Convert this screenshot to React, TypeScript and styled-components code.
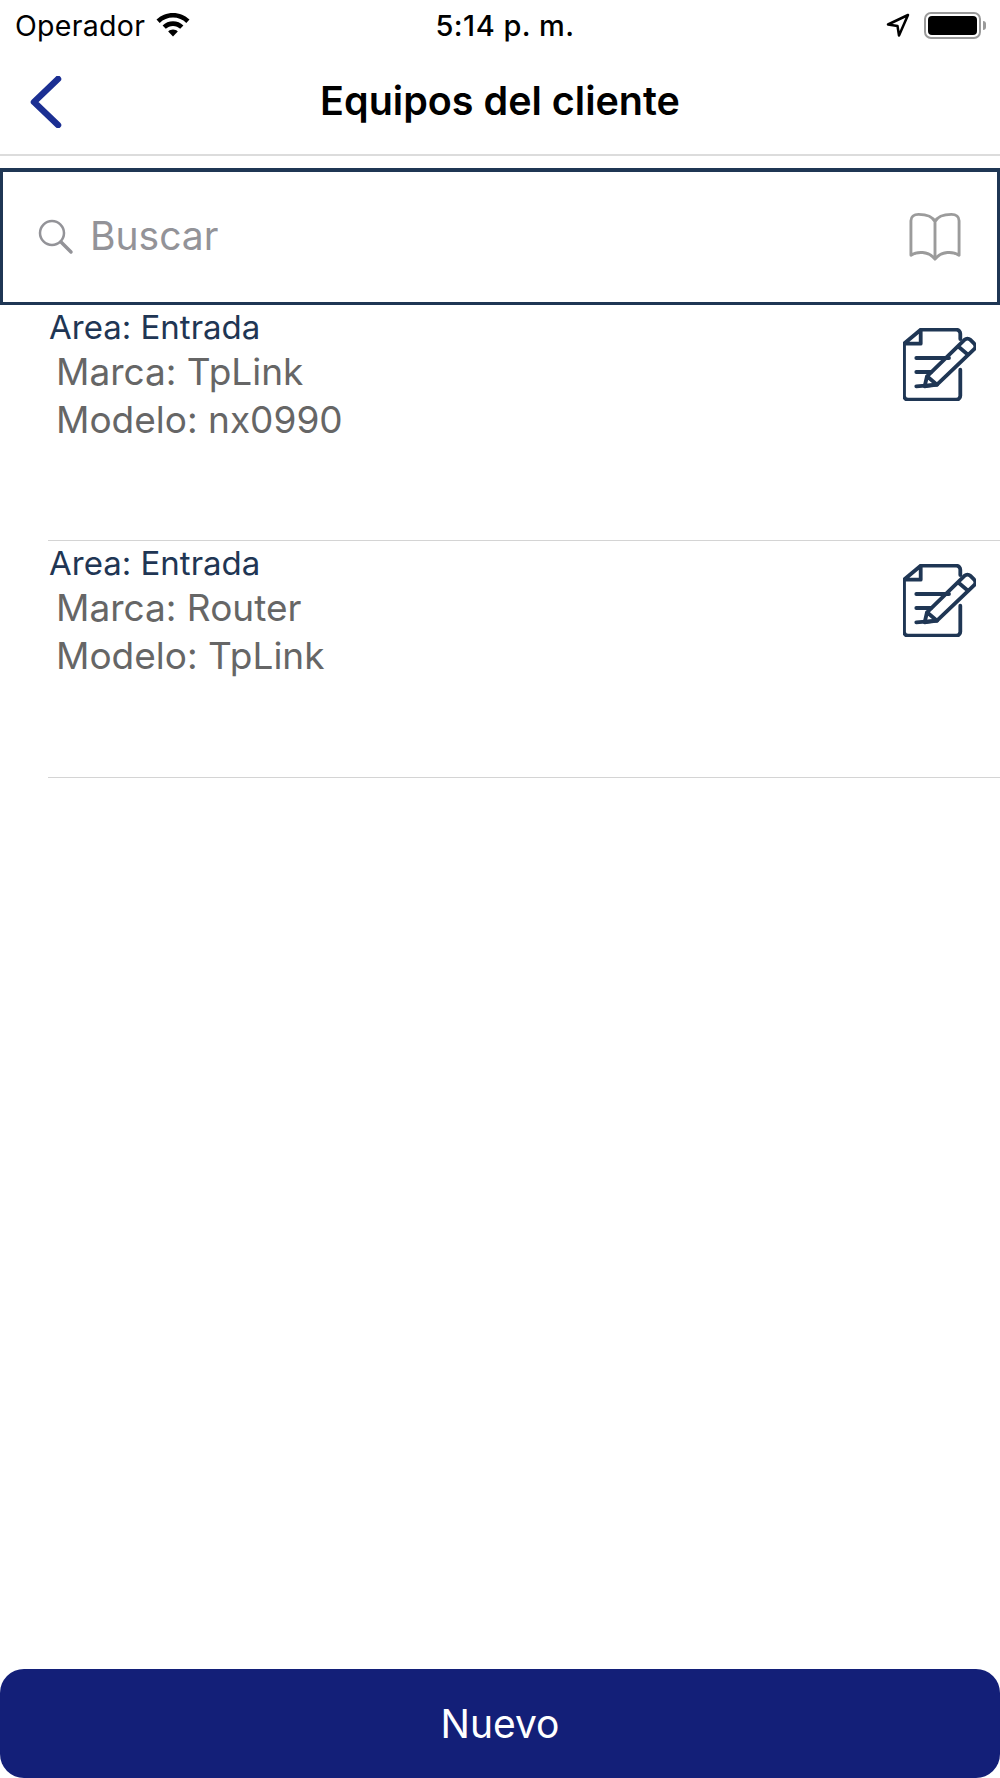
import React from 'react';
import styled, { createGlobalStyle } from 'styled-components';

const GlobalStyle = createGlobalStyle`
  html, body {
    margin: 0;
    padding: 0;
    background: #ffffff;
  }
  * {
    box-sizing: border-box;
  }
`;

const Screen = styled.div`
  width: 1000px;
  height: 1778px;
  display: flex;
  flex-direction: column;
  background: #ffffff;
  font-family: Inter, 'Liberation Sans', sans-serif;
  overflow: hidden;
`;

const StatusBar = styled.div`
  height: 50px;
  padding: 0 14px 0 15px;
  display: grid;
  grid-template-columns: 1fr auto 1fr;
  align-items: center;
  color: #000000;
`;

const StatusLeft = styled.div`
  display: flex;
  align-items: center;
  gap: 11px;
  font-size: 28.5px;
  letter-spacing: 0.3px;
`;

const StatusTime = styled.div`
  font-size: 29px;
  font-weight: 500;
  letter-spacing: 0.5px;
  margin-left: 9px;
`;

const StatusRight = styled.div`
  display: flex;
  justify-content: flex-end;
  align-items: center;
  gap: 14px;
`;

const Battery = styled.div`
  position: relative;
  width: 57px;
  height: 27px;
  margin-right: 5px;
  border: 2px solid #9a9a9a;
  border-radius: 7px;
  padding: 2px;

  &::before {
    content: '';
    display: block;
    height: 100%;
    background: #000000;
    border-radius: 4px;
  }

  &::after {
    content: '';
    position: absolute;
    right: -7px;
    top: 7px;
    width: 3px;
    height: 9px;
    background: #9a9a9a;
    border-radius: 0 3px 3px 0;
  }
`;

const NavBar = styled.div`
  position: relative;
  height: 106px;
  display: flex;
  align-items: center;
  justify-content: center;
  border-bottom: 2px solid #dcdcdc;
`;

const BackButton = styled.div`
  position: absolute;
  left: 30px;
  top: 26px;
  display: flex;
`;

const Title = styled.div`
  font-size: 39.5px;
  font-weight: 600;
  color: #000000;
  margin-top: -3px;
`;

const SearchBox = styled.div`
  margin-top: 12px;
  height: 137px;
  display: flex;
  align-items: center;
  padding: 0 36px 0 35px;
  border: solid #1f3654;
  border-width: 4px 3px 3px 3px;
`;

const SearchLabel = styled.div`
  flex: 1;
  margin-left: 16px;
  margin-top: -3px;
  font-size: 39px;
  color: #939398;
`;

const List = styled.div`
  display: flex;
  flex-direction: column;
`;

const Row = styled.div`
  position: relative;
  height: 236px;
  margin-left: 48px;
  padding-top: 3px;
  border-bottom: 1px solid #d4d4d4;

  & + & {
    height: 237px;
  }
`;

const AreaText = styled.div`
  font-size: 33px;
  line-height: 38px;
  color: #1f3654;
  margin-left: 1px;
  margin-bottom: 2px;
`;

const DetailText = styled.div`
  font-size: 37px;
  line-height: 48px;
  color: #666666;
  margin-left: 8px;
`;

const EditIcon = styled.svg`
  position: absolute;
  right: 24px;
  top: 23px;
`;

const Spacer = styled.div`
  flex: 1;
`;

const NewButton = styled.div`
  height: 109px;
  background: #131f78;
  border-radius: 24px;
  display: flex;
  align-items: center;
  justify-content: center;
  color: #ffffff;
  font-size: 39px;
`;

const WifiIcon = () => (
  <svg width="34" height="24" viewBox="0 0 34 24">
    <path d="M17 0C10.600 0 4.800 2.500.5 6.600l3.200 3.300C7.200 6.500 11.900 4.500 17 4.500s9.800 2 13.300 5.400l3.200-3.300C29.200 2.500 23.400 0 17 0z" fill="#000" />
    <path d="M17 8.300c-4 0-7.700 1.600-10.400 4.100l3.200 3.300c1.900-1.700 4.400-2.800 7.200-2.800s5.300 1.100 7.200 2.800l3.200-3.300C24.700 9.900 21 8.300 17 8.300z" fill="#000" />
    <path d="M17 16.600c-1.900 0-3.500.7-4.800 1.800L17 23.500l4.800-5.100c-1.300-1.100-2.900-1.800-4.800-1.800z" fill="#000" />
  </svg>
);

const LocationIcon = () => (
  <svg width="24" height="24" viewBox="0 0 24 24">
    <path d="M22 2L2 11.500l9.500 1.500L13 22.500z" fill="none" stroke="#000" strokeWidth="2.500" strokeLinejoin="round" />
  </svg>
);

const BackIcon = () => (
  <svg width="32" height="52" viewBox="0 0 32 52">
    <path d="M28 3L4 26l24 23" fill="none" stroke="#1b2f93" strokeWidth="6.500" strokeLinecap="round" strokeLinejoin="round" />
  </svg>
);

const SearchIcon = () => (
  <svg width="36" height="36" viewBox="0 0 36 36">
    <circle cx="14" cy="14" r="12" fill="none" stroke="#939398" strokeWidth="2.500" />
    <path d="M23 23l10 10" fill="none" stroke="#939398" strokeWidth="3.500" strokeLinecap="round" />
  </svg>
);

const BookIcon = () => (
  <svg width="52" height="50" viewBox="0 0 54 50">
    <path
      d="M27 9C24 3 18 1.500 10 1.500 5 1.500 2 4 2 8v36c6-4 18-5 25 4 7-9 19-8 25-4V8c0-4-3-6.500-8-6.500C36 1.500 30 3 27 9zM27 9v39"
      fill="none"
      stroke="#9b9b9b"
      strokeWidth="3"
      strokeLinejoin="round"
    />
  </svg>
);

const NoteIcon = () => (
  <EditIcon width="73" height="73" viewBox="0 0 73 73">
    <g fill="none" stroke="#1f3654" strokeWidth="3.800" strokeLinecap="round" strokeLinejoin="round">
      <path d="M17.700 1.700H53.300a4 4 0 0 1 4 4V11M57.300 41.700V67.700a4 4 0 0 1-4 4H5a4 4 0 0 1-4-4V15.700L17.700 1.700V15.700H1" />
      <path d="M13.300 30H46M13.300 44H28M13.300 58.300L34 56.700" />
      <path d="M21.700 58.300L24 48.300 61.700 11.700a4 4 0 0 1 5.500 0l4 4a4 4 0 0 1 0 5.500L34 56.700zM24 48.300L34 56.700M55 18.300L65 26.700" />
    </g>
  </EditIcon>
);

const equipos = [
  { area: 'Entrada', marca: 'TpLink', modelo: 'nx0990' },
  { area: 'Entrada', marca: 'Router', modelo: 'TpLink' },
];

const App = () => {
  return (
    <>
      <GlobalStyle />
      <Screen>
        <StatusBar>
          <StatusLeft>
            Operador
            <WifiIcon />
          </StatusLeft>
          <StatusTime>5:14 p. m.</StatusTime>
          <StatusRight>
            <LocationIcon />
            <Battery />
          </StatusRight>
        </StatusBar>
        <NavBar>
          <BackButton>
            <BackIcon />
          </BackButton>
          <Title>Equipos del cliente</Title>
        </NavBar>
        <SearchBox>
          <SearchIcon />
          <SearchLabel>Buscar</SearchLabel>
          <BookIcon />
        </SearchBox>
        <List>
          {equipos.map((equipo) => (
            <Row key={equipo.marca}>
              <AreaText>Area: {equipo.area}</AreaText>
              <DetailText>Marca: {equipo.marca}</DetailText>
              <DetailText>Modelo: {equipo.modelo}</DetailText>
              <NoteIcon />
            </Row>
          ))}
        </List>
        <Spacer />
        <NewButton>Nuevo</NewButton>
      </Screen>
    </>
  );
};

export default App;
